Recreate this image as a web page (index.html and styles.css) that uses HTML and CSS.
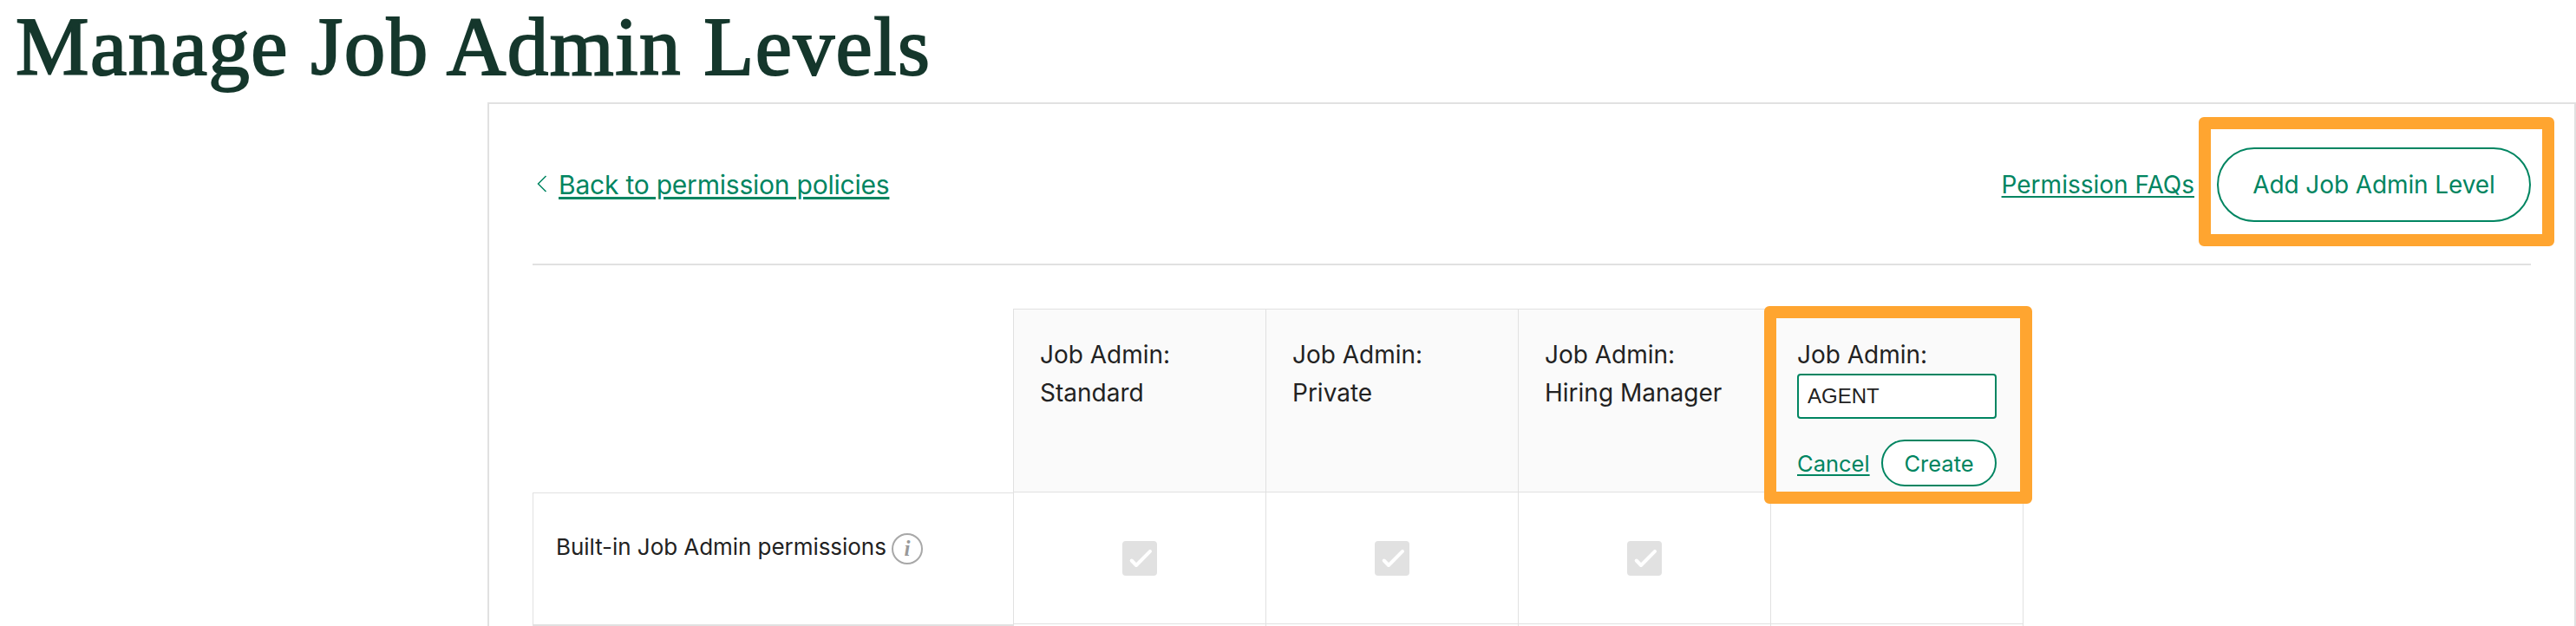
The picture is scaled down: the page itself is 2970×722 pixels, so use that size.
FILE: index.html
```html
<!DOCTYPE html>
<html lang="en">
<head>
  <meta charset="UTF-8" />
  <title>Manage Job Admin Levels</title>
  <link rel="stylesheet" href="styles.css">
</head>
<body>

<h1 class="title">Manage Job Admin Levels</h1>

<div class="panel">
  <div class="toolbar">
    <a class="back" href="#">
      <svg class="chevron" viewBox="0 0 12 20"><path d="M10.5 1 L1.5 10 L10.5 19" /></svg>
      <span>Back to permission policies</span>
    </a>
    <div class="actions">
      <a class="faq" href="#">Permission FAQs</a>
      <button class="add-level">Add Job Admin Level</button>
      <div class="highlight highlight-add"></div>
    </div>
  </div>

  <div class="grid">
    <div class="corner"></div>
    <div class="head">Job Admin:<br>Standard</div>
    <div class="head">Job Admin:<br>Private</div>
    <div class="head">Job Admin:<br>Hiring Manager</div>
    <div class="head head-new">
      <label for="level">Job Admin:</label>
      <input type="text" id="level" value="AGENT" />
      <div class="form-actions">
        <a class="cancel" href="#">Cancel</a>
        <button class="create">Create</button>
      </div>
      <div class="highlight highlight-new"></div>
    </div>

    <div class="label">
      <span>Built-in Job Admin permissions</span>
      <i class="info">i</i>
    </div>
    <div class="cell"><svg class="check" viewBox="0 0 40 40"><path d="M10.7 22.5 L16 28 L32 11.8" /></svg></div>
    <div class="cell"><svg class="check" viewBox="0 0 40 40"><path d="M10.7 22.5 L16 28 L32 11.8" /></svg></div>
    <div class="cell"><svg class="check" viewBox="0 0 40 40"><path d="M10.7 22.5 L16 28 L32 11.8" /></svg></div>
    <div class="cell last"></div>

    <div class="corner"></div>
    <div class="cell next"></div>
    <div class="cell next"></div>
    <div class="cell next"></div>
    <div class="cell next last"></div>
  </div>
</div>

</body>
</html>
```
FILE: styles.css
```css
* {
  box-sizing: border-box;
}

body {
  margin: 0;
  height: 722px;
  overflow: hidden;
  background: #fff;
  color: #222;
  font-family: Inter, "Liberation Sans", sans-serif;
}

a {
  color: #008561;
}

button {
  border: 2px solid #008561;
  background: #fff;
  color: #008561;
  font-family: inherit;
  padding: 0;
}

.title {
  margin: 0;
  height: 118px;
  padding-left: 18px;
  font-family: "Liberation Serif", serif;
  font-size: 95px;
  font-weight: 400;
  line-height: 109px;
  letter-spacing: 1.5px;
  color: #15372c;
  -webkit-text-stroke: 2px #15372c;
  white-space: nowrap;
}

.panel {
  margin-left: 562px;
  height: 604px;
  padding: 0 50px;
  border: 2px solid #e1e1e1;
  border-bottom: 0;
}

.toolbar {
  display: flex;
  justify-content: space-between;
  align-items: center;
  height: 186px;
  padding-top: 2px;
  border-bottom: 2px solid #e1e1e1;
  font-size: 30px;
  white-space: nowrap;
}

.back {
  display: flex;
  align-items: center;
  gap: 13px;
  padding-left: 5px;
  text-decoration: none;
}

.back span {
  letter-spacing: -0.22px;
  text-decoration: underline;
  text-decoration-thickness: 3px;
  text-underline-offset: 3px;
}

.chevron {
  width: 12px;
  height: 20px;
  margin-bottom: 2px;
  fill: none;
  stroke: #008561;
  stroke-width: 1.5;
}

.actions {
  position: relative;
  display: flex;
  align-items: center;
  gap: 26px;
}

.faq {
  font-size: 28px;
  text-decoration-thickness: 2px;
  text-underline-offset: 3px;
}

.add-level {
  width: 362px;
  height: 86px;
  border-radius: 43px;
  font-size: 28px;
  letter-spacing: -0.1px;
}

/* orange callouts drawn over the page */
.highlight {
  position: absolute;
  border: 14px solid #ffa530;
  border-radius: 6px;
}

.highlight-add {
  top: -35px;
  right: -27px;
  width: 410px;
  height: 149px;
}

.highlight-new {
  top: -4px;
  left: -8px;
  width: 309px;
  height: 228px;
}

.grid {
  display: grid;
  grid-template-columns: 554px repeat(3, 291px) 292px;
  grid-template-rows: 211px 152px 3px;
  margin-top: 50px;
}

.head {
  padding: 30px 0 0 30px;
  border-left: 1px solid #e1e1e1;
  border-top: 1px solid #e1e1e1;
  background: #fafafa;
  font-size: 28px;
  line-height: 44px;
}

.head-new {
  position: relative;
}

.head-new label {
  display: block;
}

.head-new input {
  display: block;
  width: 230px;
  height: 52px;
  padding: 0 10px;
  border: 2px solid #008561;
  border-radius: 4px;
  background: #fff;
  color: #222;
  font-family: "Liberation Sans", Arial, sans-serif;
  font-size: 24px;
}

.form-actions {
  display: flex;
  justify-content: space-between;
  align-items: center;
  width: 230px;
  margin-top: 24px;
}

.cancel {
  padding-top: 2px;
  font-size: 25.5px;
  line-height: 32px;
  text-decoration-thickness: 2px;
  text-underline-offset: 3px;
}

.create {
  width: 133px;
  height: 54px;
  border-radius: 27px;
  font-size: 25.5px;
}

.label {
  display: flex;
  align-items: flex-start;
  gap: 6px;
  margin-top: 1px;
  padding: 44px 0 0 26px;
  height: 154px;
  border: 1px solid #e1e1e1;
  border-right: 0;
  border-bottom-width: 2px;
  font-size: 26px;
  line-height: 36px;
  letter-spacing: -0.05px;
  white-space: nowrap;
}

.info {
  width: 36px;
  height: 36px;
  margin-top: 2px;
  border: 2px solid #a8a8a8;
  border-radius: 50%;
  color: #999;
  font-family: "Liberation Serif", serif;
  font-size: 25px;
  font-weight: bold;
  line-height: 32px;
  text-align: center;
}

.cell {
  display: flex;
  justify-content: center;
  padding-top: 56px;
  border-left: 1px solid #e1e1e1;
  border-top: 1px solid #e1e1e1;
}

.next {
  padding-top: 0;
}

.last {
  border-right: 1px solid #e1e1e1;
}

.check {
  width: 40px;
  height: 40px;
  border-radius: 4px;
  background: #e1e1e1;
  fill: none;
  stroke: #fff;
  stroke-width: 4;
  stroke-linecap: round;
  stroke-linejoin: round;
}
```
